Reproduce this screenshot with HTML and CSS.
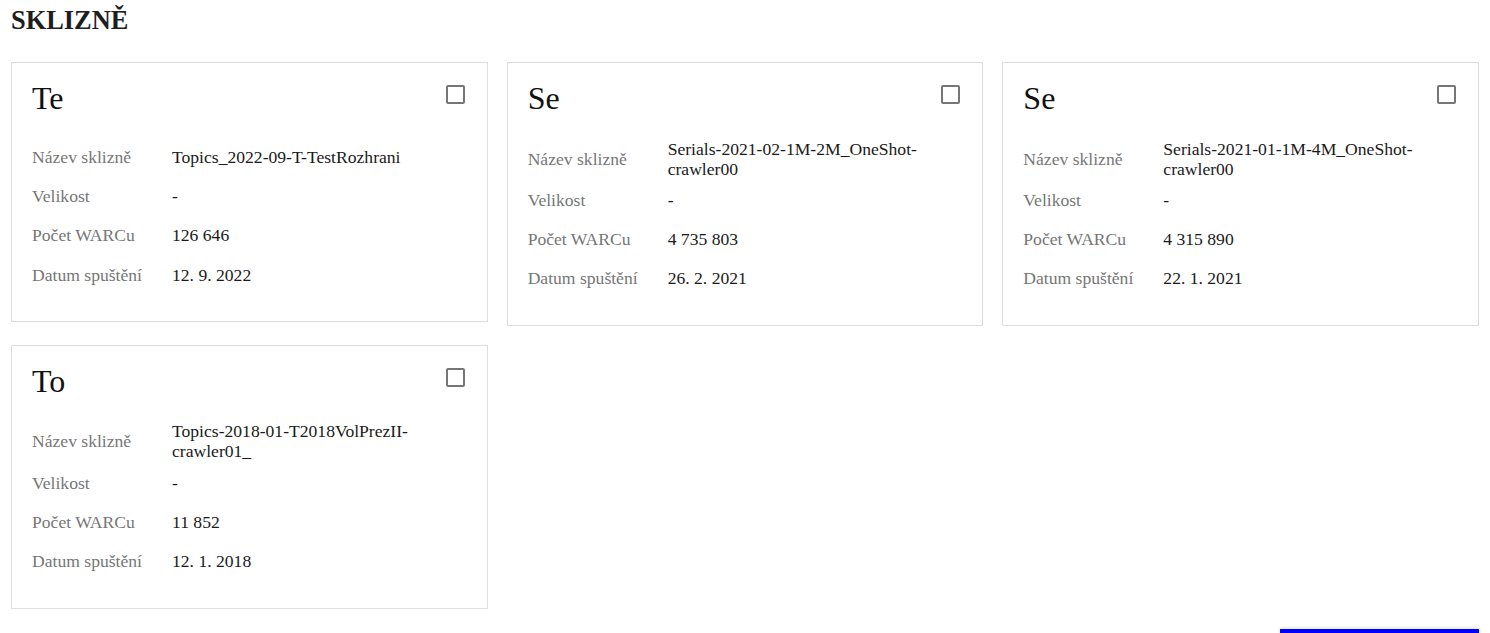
FILE: index.html
```html
<!DOCTYPE html>
<html lang="cs">
<head>
<meta charset="utf-8">
<title>Sklizně</title>
<link rel="stylesheet" href="styles.css">
</head>
<body>
<main class="page">
  <h1 class="page-title">SKLIZNĚ</h1>
  <section class="cards">
    <article class="card">
      <header class="card-head">
        <h2 class="card-title">Te</h2>
        <span class="check" role="checkbox" aria-checked="false"></span>
      </header>
      <div class="props">
        <div class="prop"><span class="prop-label">Název sklizně</span><span class="prop-value">Topics_2022-09-T-TestRozhrani</span></div>
        <div class="prop"><span class="prop-label">Velikost</span><span class="prop-value">-</span></div>
        <div class="prop"><span class="prop-label">Počet WARCu</span><span class="prop-value">126 646</span></div>
        <div class="prop"><span class="prop-label">Datum spuštění</span><span class="prop-value">12. 9. 2022</span></div>
      </div>
    </article>
    <article class="card">
      <header class="card-head">
        <h2 class="card-title">Se</h2>
        <span class="check" role="checkbox" aria-checked="false"></span>
      </header>
      <div class="props">
        <div class="prop"><span class="prop-label">Název sklizně</span><span class="prop-value">Serials-2021-02-1M-2M_OneShot-crawler00</span></div>
        <div class="prop"><span class="prop-label">Velikost</span><span class="prop-value">-</span></div>
        <div class="prop"><span class="prop-label">Počet WARCu</span><span class="prop-value">4 735 803</span></div>
        <div class="prop"><span class="prop-label">Datum spuštění</span><span class="prop-value">26. 2. 2021</span></div>
      </div>
    </article>
    <article class="card">
      <header class="card-head">
        <h2 class="card-title">Se</h2>
        <span class="check" role="checkbox" aria-checked="false"></span>
      </header>
      <div class="props">
        <div class="prop"><span class="prop-label">Název sklizně</span><span class="prop-value">Serials-2021-01-1M-4M_OneShot-crawler00</span></div>
        <div class="prop"><span class="prop-label">Velikost</span><span class="prop-value">-</span></div>
        <div class="prop"><span class="prop-label">Počet WARCu</span><span class="prop-value">4 315 890</span></div>
        <div class="prop"><span class="prop-label">Datum spuštění</span><span class="prop-value">22. 1. 2021</span></div>
      </div>
    </article>
    <article class="card">
      <header class="card-head">
        <h2 class="card-title">To</h2>
        <span class="check" role="checkbox" aria-checked="false"></span>
      </header>
      <div class="props">
        <div class="prop"><span class="prop-label">Název sklizně</span><span class="prop-value">Topics-2018-01-T2018VolPrezII-crawler01_</span></div>
        <div class="prop"><span class="prop-label">Velikost</span><span class="prop-value">-</span></div>
        <div class="prop"><span class="prop-label">Počet WARCu</span><span class="prop-value">11 852</span></div>
        <div class="prop"><span class="prop-label">Datum spuštění</span><span class="prop-value">12. 1. 2018</span></div>
      </div>
    </article>
  </section>
  <div class="actions">
    <button class="action-btn" type="button"></button>
  </div>
</main>
</body>
</html>
```
FILE: styles.css
```css
html, body {
  margin: 0;
  padding: 0;
  background: #fff;
}

body {
  font-family: "Liberation Serif", "Times New Roman", serif;
  color: #222;
}

.page {
  padding: 5px 11px 0 11px;
}

.page-title {
  margin: 0 0 26px 0;
  font-size: 26.4px;
  font-weight: bold;
  line-height: normal;
  color: #1e1e1e;
}

.cards {
  display: grid;
  grid-template-columns: repeat(3, 1fr);
  gap: 19px;
  align-items: start;
}

.card {
  border: 1px solid #dedede;
  padding: 17px 20px 27px 20px;
  background: #fff;
}

.card-head {
  display: flex;
  justify-content: space-between;
  align-items: flex-start;
  margin-bottom: 20px;
}

.card-title {
  margin: 0;
  font-size: 32px;
  font-weight: normal;
  line-height: normal;
  color: #111;
}

.check {
  box-sizing: border-box;
  width: 19px;
  height: 19px;
  margin: 4.7px 2px 0 0;
  border: 2px solid #767676;
  border-radius: 2px;
  background: #fff;
}

.props {
  display: flex;
  flex-direction: column;
}

.prop {
  box-sizing: border-box;
  display: flex;
  align-items: center;
  min-height: 39.3px;
  padding: 1.5px 0;
  font-size: 17.6px;
  line-height: 20px;
}

.prop-label {
  flex: 0 0 140px;
  color: #767676;
}

.prop-value {
  flex: 1 1 auto;
  min-width: 0;
  color: #1a1a1a;
}

.actions {
  display: flex;
  justify-content: flex-end;
  margin-top: 20px;
}

.action-btn {
  width: 199px;
  height: 40px;
  border: 0;
  background: #0000ff;
  box-shadow: 0 -1px 3px rgba(0, 0, 0, 0.12);
}
```
